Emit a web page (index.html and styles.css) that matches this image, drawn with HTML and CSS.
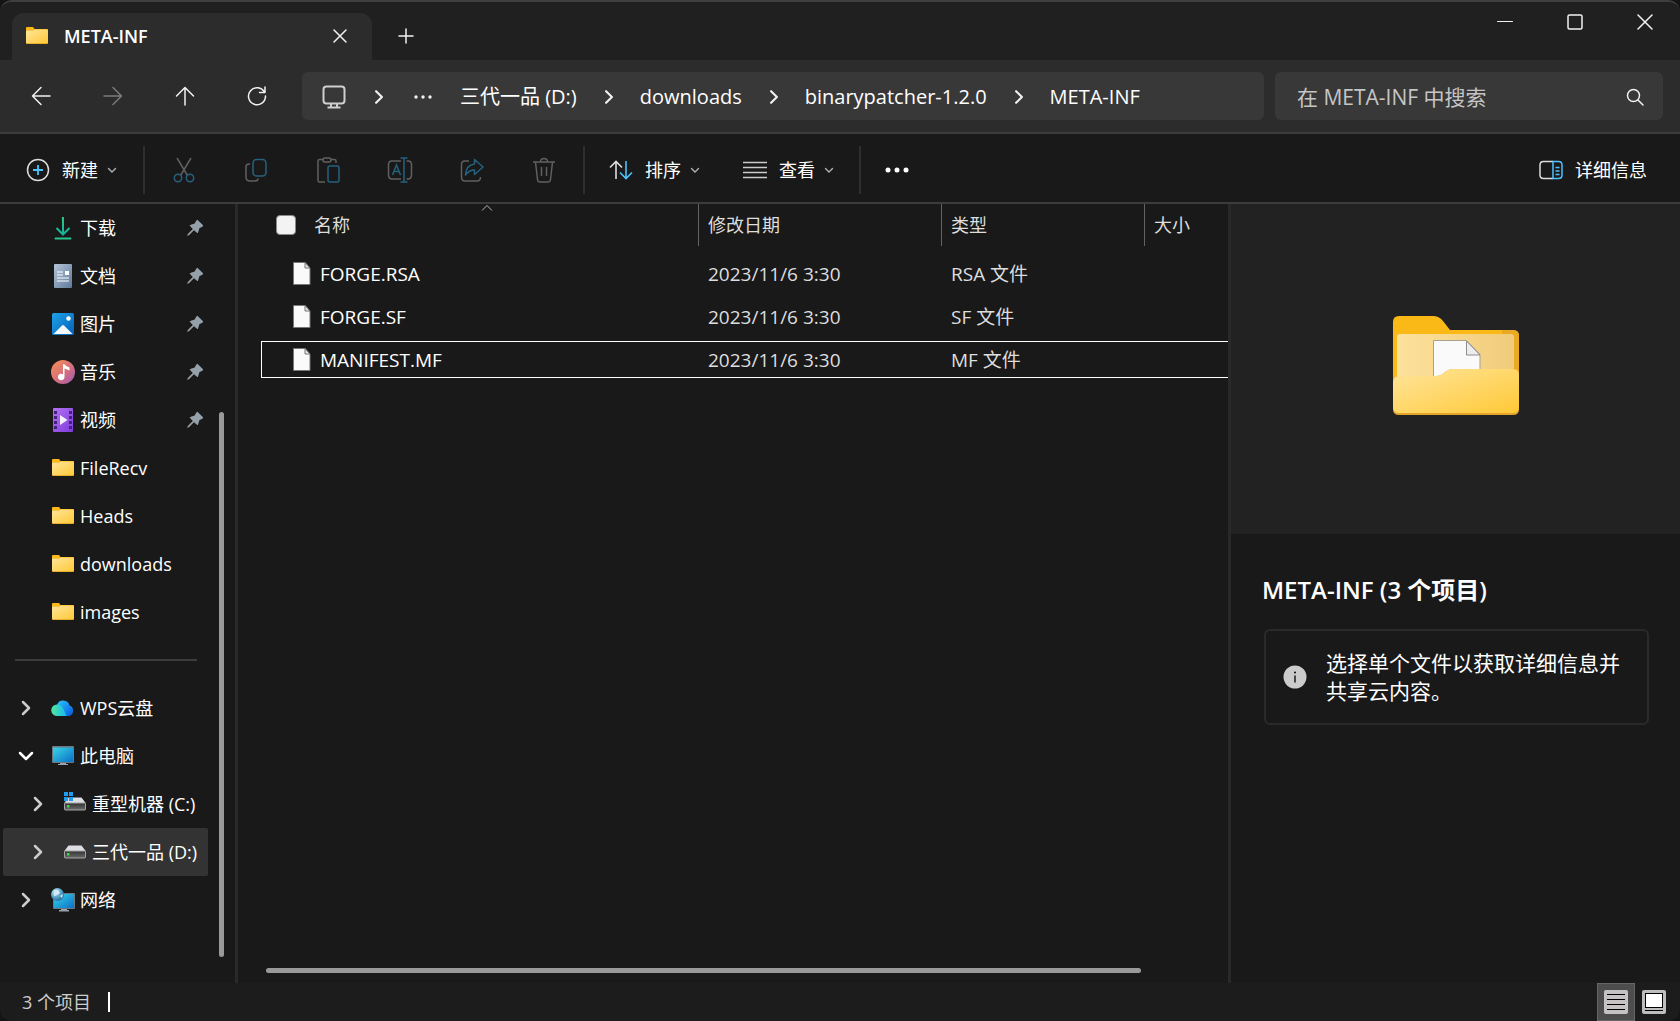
FILE: index.html
```
<!DOCTYPE html>
<html lang="zh-CN">
<head>
  <meta charset="UTF-8" />
  <meta name="viewport" content="width=device-width, initial-scale=1.0" />
  <title>META-INF</title>
  <link rel="stylesheet" href="styles.css">
</head>
<body>
  <svg class="defs" width="0" height="0" aria-hidden="true">
    <defs>
      <linearGradient id="gFolder" x1="0" y1="0" x2="1" y2="1"><stop offset="0" stop-color="#ffe59c"/><stop offset="1" stop-color="#ffc937"/></linearGradient>
      <linearGradient id="gInner" x1="0" y1="0" x2="1" y2="0"><stop offset="0" stop-color="#fde29c"/><stop offset="1" stop-color="#f0cb7b"/></linearGradient>
      <linearGradient id="gDown" x1="0" y1="0" x2="0" y2="1"><stop offset="0" stop-color="#2fce86"/><stop offset="1" stop-color="#15b09a"/></linearGradient>
      <linearGradient id="gDoc" x1="0" y1="0" x2="1" y2="1"><stop offset="0" stop-color="#b4c4d8"/><stop offset="1" stop-color="#5e7a9b"/></linearGradient>
      <linearGradient id="gPic" x1="0" y1="0" x2="1" y2="1"><stop offset="0" stop-color="#1ea2e8"/><stop offset="1" stop-color="#0560b6"/></linearGradient>
      <linearGradient id="gMusic" x1="0" y1="0" x2="1" y2="1"><stop offset="0" stop-color="#f9914f"/><stop offset=".55" stop-color="#d4707d"/><stop offset="1" stop-color="#a256bc"/></linearGradient>
      <linearGradient id="gVideo" x1="0" y1="0" x2="1" y2="1"><stop offset="0" stop-color="#b273f3"/><stop offset="1" stop-color="#7f3bdc"/></linearGradient>
      <linearGradient id="gScreen" x1="0" y1="0" x2="1" y2="1"><stop offset="0" stop-color="#37d6e5"/><stop offset="1" stop-color="#0b6fc8"/></linearGradient>
      <linearGradient id="gCloud" x1="0" y1="0" x2="1" y2="1"><stop offset="0" stop-color="#2cc6ff"/><stop offset="1" stop-color="#0757dd"/></linearGradient>
      <linearGradient id="gCloud2" x1="0" y1="0" x2="1" y2="0"><stop offset="0" stop-color="#53e89b"/><stop offset="1" stop-color="#12b9fb"/></linearGradient>
      <linearGradient id="gDisk" x1="0" y1="0" x2="0" y2="1"><stop offset="0" stop-color="#333"/><stop offset="1" stop-color="#6a6a6a"/></linearGradient>
      <radialGradient id="gGlobe" cx=".35" cy=".3" r=".8"><stop offset="0" stop-color="#d9f1fa"/><stop offset=".5" stop-color="#5ba6cd"/><stop offset="1" stop-color="#1e5f8f"/></radialGradient>
    </defs>
    <symbol id="folder" viewBox="0 0 24 24">
      <path d="M1 18V4Q1 3 2 3H8l1.500 2H22q1 0 1 1V12z" fill="#fbb918"/>
      <rect x="1" y="6" width="22" height="14" rx="1" fill="#e3a51f"/>
      <path d="M1 7.500q0-1 1-1h6.500l1.500-1H22q1 0 1 1v12q0 .7-1 .7H2q-1 0-1-.7z" fill="url(#gFolder)"/>
    </symbol>
    <symbol id="pin" viewBox="0 0 18 18">
      <path d="M10.500 1.200q.7-.7 1.400 0l4.900 4.900q.7.700-.1 1.300l-3.300 1.900-1.300 4.200q-.4.900-1.100.2L7.900 11.200 3.200 16 1.600 16.700 1.200 16.300 2 14.800 6.800 10 4 7q-.7-.7.200-1.100l4.500-1.300z" fill="#95a0a8"/>
    </symbol>
    <symbol id="file" viewBox="0 0 18 23">
      <path d="M.5.5H12L17 6V22.500H.5z" fill="#fafafa" stroke="#777"/>
      <path d="M12 .5V6h5z" fill="#e6e6e6" stroke="#777"/>
    </symbol>
    <symbol id="right" viewBox="0 0 22 22"><path d="M8 5l6 6-6 6" fill="none" stroke="#ccc" stroke-width="2.500" stroke-linecap="round" stroke-linejoin="round"/></symbol>
    <symbol id="crumb" viewBox="0 0 12 12"><path d="M3.500 1l5 5-5 5" fill="none" stroke="#f2f2f2" stroke-width="1.800" stroke-linecap="round" stroke-linejoin="round"/></symbol>
    <symbol id="small-down" viewBox="0 0 10 10"><path d="M1.500 3.500L5 7l3.500-3.500" fill="none" stroke="#b0b0b0" stroke-width="1.400" stroke-linecap="round"/></symbol>
    <symbol id="disk" viewBox="0 0 24 24">
      <path d="M5.500 5.500h13L23 11.500H1z" fill="#dcdee2"/>
      <rect x="1.500" y="11" width="21" height="7" rx=".8" fill="url(#gDisk)" stroke="#a4a4a4"/>
      <rect x="4" y="13" width="2.500" height="2.500" fill="#35dd3c"/>
    </symbol>
  </svg>

  <div class="window">
    <header class="titlebar">
      <div class="tab">
        <svg width="24" height="24"><use href="#folder"/></svg>
        <span class="tab-title">META-INF</span>
        <button class="tab-close" aria-label="关闭标签页">
          <svg width="14" height="14" viewBox="0 0 14 14"><path d="M1 1l12 12M13 1L1 13" class="line"/></svg>
        </button>
      </div>
      <button class="tab-add" aria-label="新标签页">
        <svg width="16" height="16" viewBox="0 0 16 16"><path d="M8 1v14M1 8h14" class="line"/></svg>
      </button>
      <div class="win-buttons">
        <button aria-label="最小化"><svg width="16" height="16" viewBox="0 0 16 16"><path d="M.5 7.500h15" class="line thin"/></svg></button>
        <button aria-label="最大化"><svg width="16" height="16" viewBox="0 0 16 16"><rect x="1" y="1" width="14" height="14" rx="1.500" class="line"/></svg></button>
        <button aria-label="关闭"><svg width="16" height="16" viewBox="0 0 16 16"><path d="M1 1l14 14M15 1L1 15" class="line"/></svg></button>
      </div>
    </header>

    <div class="navbar">
      <div class="nav-buttons">
        <button aria-label="后退"><svg width="20" height="20" viewBox="0 0 20 20"><path d="M19 10H1.500M10 1.500L1.500 10l8.500 8.500" class="line"/></svg></button>
        <button aria-label="前进" disabled><svg width="20" height="20" viewBox="0 0 20 20"><path d="M1 10h17.500M10 1.500l8.500 8.500-8.500 8.500" class="line"/></svg></button>
        <button aria-label="向上"><svg width="20" height="20" viewBox="0 0 20 20"><path d="M10 19V1.500M1.500 10L10 1.500l8.500 8.500" class="line"/></svg></button>
        <button aria-label="刷新"><svg width="20" height="20" viewBox="0 0 20 20"><path d="M17.500 6.200A8.500 8.500 0 1 0 18.500 10M18 1v5.500h-5.500" class="line"/></svg></button>
      </div>
      <nav class="address" aria-label="地址栏">
        <button class="monitor" aria-label="位置">
          <svg width="24" height="24" viewBox="0 0 24 24" fill="none" stroke="#cfcfcf" stroke-width="2"><rect x="1.500" y="1.500" width="21" height="17" rx="3"/><path d="M9 19v3M15 19v3M5.500 22.500h13"/></svg>
        </button>
        <svg width="14" height="14"><use href="#crumb"/></svg>
        <button class="dots" aria-label="更多位置"><svg width="18" height="4" viewBox="0 0 18 4" fill="#f2f2f2"><circle cx="2" cy="2" r="1.700"/><circle cx="9" cy="2" r="1.700"/><circle cx="16" cy="2" r="1.700"/></svg></button>
        <button class="crumb">三代一品 (D:)</button>
        <svg width="14" height="14"><use href="#crumb"/></svg>
        <button class="crumb">downloads</button>
        <svg width="14" height="14"><use href="#crumb"/></svg>
        <button class="crumb">binarypatcher-1.2.0</button>
        <svg width="14" height="14"><use href="#crumb"/></svg>
        <button class="crumb">META-INF</button>
      </nav>
      <div class="search">
        <input type="text" placeholder="在 META-INF 中搜索" aria-label="搜索" />
        <svg width="18" height="18" viewBox="0 0 18 18"><circle cx="7.500" cy="7.500" r="6" class="line"/><path d="M12 12l5 5" class="line"/></svg>
      </div>
    </div>

    <div class="commands">
      <button class="cmd new">
        <svg width="24" height="24" viewBox="0 0 24 24" fill="none"><circle cx="12" cy="12" r="10.500" stroke="#ddd" stroke-width="1.500"/><path d="M12 7v10M7 12h10" stroke="#4cc2ff" stroke-width="1.800"/></svg>
        新建
        <svg class="caret" width="10" height="10"><use href="#small-down"/></svg>
      </button>
      <div class="cmd-icons">
        <button aria-label="剪切" disabled><svg width="24" height="26" viewBox="0 0 24 26"><path d="M5 1l10.500 17.500M19 1L8.500 18.500" class="gray"/><circle cx="6" cy="21" r="3.700" class="blue"/><circle cx="18" cy="21" r="3.700" class="blue"/></svg></button>
        <button aria-label="复制" disabled><svg width="24" height="26" viewBox="0 0 24 26"><path d="M6 7H5q-3 0-3 3v10q0 4 4 4h5q3 0 3-2.500" class="gray"/><rect x="9" y="2.500" width="13" height="16.500" rx="3.500" class="blue"/></svg></button>
        <button aria-label="粘贴" disabled><svg width="24" height="26" viewBox="0 0 24 26"><path d="M9 25H3.500Q2 25 2 23.500V4q0-1.500 1.500-1.500H7M15 2.500h3.500Q20 2.500 20 4v2" class="gray"/><rect x="7" y="1" width="8" height="4" rx="2" class="gray"/><rect x="12" y="9" width="11" height="16" rx="2" class="blue"/></svg></button>
        <button aria-label="重命名" disabled><svg width="26" height="26" viewBox="0 0 26 26"><path d="M14 4H5Q1.500 4 1.500 7.500v10Q1.500 22 5 22h9M19.500 4H21q3.500 0 3.500 3.500v10Q24.500 22 21 22h-1.500" class="gray"/><path d="M5.500 18L9.500 8l4 10M7 14.500h5M13.500 1h7M17 1v24M13.500 25h7" class="blue"/></svg></button>
        <button aria-label="共享" disabled><svg width="24" height="26" viewBox="0 0 24 26"><path d="M9 4H5Q1.500 4 1.500 7.500V20Q1.500 24 5 24h12q3.500 0 3.500-4" class="gray"/><path d="M14.500 2.500L23 10l-8.500 7.500V13Q9 13 5.500 18 6 8 14.500 7z" class="blue" stroke-linejoin="round"/></svg></button>
        <button aria-label="删除" disabled><svg width="24" height="26" viewBox="0 0 24 26"><path d="M1 5h22M8.500 5q0-3.500 3.500-3.500T15.500 5M3.500 5l2 17.500q.3 2.500 2.500 2.500h8q2.200 0 2.500-2.500L20.500 5M9.500 10v9M14.500 10v9" class="gray"/></svg></button>
      </div>
      <div class="cmd-group">
        <button class="cmd">
          <svg width="24" height="20" viewBox="0 0 24 20" fill="none" stroke-width="1.600"><path d="M7 19V1.500M1 7.500l6-6 6 6" stroke="#ddd"/><path d="M17 1v17.500M11 12.500l6 6 6-6" stroke="#4cc2ff"/></svg>
          排序
          <svg class="caret" width="10" height="10"><use href="#small-down"/></svg>
        </button>
        <button class="cmd">
          <svg width="24" height="20" viewBox="0 0 24 20"><path d="M0 2.500h24M0 7.500h24M0 12.500h24M0 17.500h24" stroke="#ccc" stroke-width="1.500"/></svg>
          查看
          <svg class="caret" width="10" height="10"><use href="#small-down"/></svg>
        </button>
      </div>
      <button class="more" aria-label="更多"><svg width="24" height="6" viewBox="0 0 24 6" fill="#fff"><circle cx="3" cy="3" r="2.500"/><circle cx="12" cy="3" r="2.500"/><circle cx="21" cy="3" r="2.500"/></svg></button>
      <button class="cmd details-toggle">
        <svg width="24" height="20" viewBox="0 0 24 20" fill="none" stroke-width="1.500"><path d="M14 1.500H4.500Q1 1.500 1 5v10q0 3.500 3.500 3.500H14" stroke="#ddd"/><path d="M14 1.500h5.500Q23 1.500 23 5v10q0 3.500-3.500 3.500H14zM16.500 7.500h4M16.500 11h4M16.500 14.500h4" stroke="#4cc2ff"/></svg>
        详细信息
      </button>
    </div>

    <div class="content">
      <aside class="sidebar">
        <ul>
          <li><a href="#"><svg viewBox="0 0 24 24" fill="none" stroke="url(#gDown)" stroke-width="2"><path d="M11.900 1l.2 17M5.500 12l6.500 6.500 6.500-6.500"/><path d="M4 22h16v1H4z" fill="#27c48f" stroke="#27c48f" stroke-width="1"/></svg>下载</a><svg class="pin"><use href="#pin"/></svg></li>
          <li><a href="#"><svg viewBox="0 0 24 24"><rect x="3" width="18" height="24" rx="1" fill="url(#gDoc)"/><path d="M6 8h6M6 11h6M6 14h12M6 17h12" stroke="#fff" stroke-width="1.200"/><rect x="14" y="7" width="4" height="4" fill="#fff"/></svg>文档</a><svg class="pin"><use href="#pin"/></svg></li>
          <li><a href="#"><svg viewBox="0 0 24 24"><rect x="1" y="1" width="22" height="22" rx="1.500" fill="url(#gPic)"/><path d="M2.500 22l8.500-8.500q1-1 2 0l8.500 8.500z" fill="#f4f8fc"/><circle cx="17.500" cy="6.500" r="2.200" fill="#fff"/></svg>图片</a><svg class="pin"><use href="#pin"/></svg></li>
          <li><a href="#"><svg viewBox="0 0 24 24"><circle cx="12" cy="12" r="12" fill="url(#gMusic)"/><path d="M12 4.500l1-.5q2 2.500 5.500 3.500v3l-5-2V17a3.300 3.300 0 1 1-1.500-2.800z" fill="#fff"/></svg>音乐</a><svg class="pin"><use href="#pin"/></svg></li>
          <li><a href="#"><svg viewBox="0 0 24 24"><rect x="2" width="20" height="24" rx="1" fill="url(#gVideo)"/><path d="M4.500 3v20M19.500 3v20" stroke="#45217e" stroke-width="3" stroke-dasharray="3 2"/><path d="M9 7l7.500 5L9 17z" fill="#f5effd"/></svg>视频</a><svg class="pin"><use href="#pin"/></svg></li>
          <li><a href="#"><svg><use href="#folder"/></svg>FileRecv</a></li>
          <li><a href="#"><svg><use href="#folder"/></svg>Heads</a></li>
          <li><a href="#"><svg><use href="#folder"/></svg>downloads</a></li>
          <li><a href="#"><svg><use href="#folder"/></svg>images</a></li>
        </ul>
        <hr>
        <ul class="tree">
          <li>
            <button aria-label="展开"><svg><use href="#right"/></svg></button>
            <a href="#"><svg viewBox="0 0 24 24"><path d="M6 9a6.500 6.500 0 0 1 12.500.5A5.500 5.500 0 0 1 18 20H9z" fill="url(#gCloud)"/><path d="M6.500 8.500Q10 8.500 12 12l3.500 8H7A5.800 5.800 0 1 1 6.500 8.500z" fill="url(#gCloud2)"/></svg>WPS云盘</a>
          </li>
          <li>
            <button aria-label="折叠"><svg viewBox="0 0 22 22"><path d="M5 8l6 6 6-6" fill="none" stroke="#fff" stroke-width="2.500" stroke-linecap="round" stroke-linejoin="round"/></svg></button>
            <a href="#"><svg viewBox="0 0 24 24"><path d="M9 19h6v1h2v1H7v-1h2z" fill="#9aa3ab"/><rect x="1" y="2" width="22" height="17" rx="1" fill="#6d7780"/><rect x="2" y="3.500" width="20" height="14.500" fill="url(#gScreen)"/></svg>此电脑</a>
          </li>
          <li class="sub">
            <button aria-label="展开"><svg><use href="#right"/></svg></button>
            <a href="#"><svg viewBox="0 0 24 24"><use href="#disk"/><path d="M1 0h4v4H1zM6 0h4v4H6zM1 5h4v4H1zM6 5h4v4H6z" fill="#1f9cf0"/></svg>重型机器 (C:)</a>
          </li>
          <li class="sub selected">
            <button aria-label="展开"><svg><use href="#right"/></svg></button>
            <a href="#"><svg><use href="#disk"/></svg>三代一品 (D:)</a>
          </li>
          <li>
            <button aria-label="展开"><svg><use href="#right"/></svg></button>
            <a href="#"><svg viewBox="0 0 24 24"><path d="M10 21h6v1h2v1.500H8V22h2z" fill="#9aa3ab"/><rect x="2" y="5" width="22" height="16" rx="1" fill="#6d7780"/><rect x="3" y="6" width="20" height="14" fill="url(#gScreen)"/><circle cx="6.500" cy="6.500" r="6.500" fill="url(#gGlobe)"/><path d="M3 3q3-2 5 0t-2 4-3 1zM9 8l3-2-1 4z" fill="#cfeaf5"/></svg>网络</a>
          </li>
        </ul>
        <div class="scroll-y"></div>
      </aside>

      <main class="files">
        <table>
          <colgroup><col class="c-name"><col class="c-date"><col class="c-type"><col></colgroup>
          <thead>
            <tr>
              <th class="name-head">
                <div><input type="checkbox" id="all" /><label for="all">名称</label></div>
                <svg class="sort-mark" width="12" height="8" viewBox="0 0 12 8"><path d="M1 6.500l5-5 5 5" fill="none" stroke="#bbb"/></svg>
              </th>
              <th><div>修改日期</div></th>
              <th><div>类型</div></th>
              <th><div>大小</div></th>
            </tr>
          </thead>
          <tbody>
            <tr><td><div class="file-name"><svg><use href="#file"/></svg>FORGE.RSA</div></td><td>2023/11/6 3:30</td><td>RSA 文件</td><td></td></tr>
            <tr><td><div class="file-name"><svg><use href="#file"/></svg>FORGE.SF</div></td><td>2023/11/6 3:30</td><td>SF 文件</td><td></td></tr>
            <tr class="focused"><td><div class="file-name"><svg><use href="#file"/></svg>MANIFEST.MF</div></td><td>2023/11/6 3:30</td><td>MF 文件</td><td></td></tr>
          </tbody>
        </table>
        <div class="scroll-x"></div>
      </main>

      <section class="details">
        <div class="preview">
          <svg width="128" height="102" viewBox="0 0 128 102">
            <path d="M1 92V7q0-6 6-6h34q6 0 10 5l7 9h63q6 0 6 6v72z" fill="#fbb918"/>
            <path d="M110 15h11q6 0 6 6v60h-17z" fill="#e9a922"/>
            <rect x="5" y="19" width="117" height="60" rx="3" fill="url(#gInner)"/>
            <path d="M41.500 25.500H74.500L88 39.500V70H41.500z" fill="#fafafa" stroke="#a9a18c"/>
            <path d="M74.500 26v14H88z" fill="#ededed" stroke="#8d8d8d"/>
            <path d="M1 68q0-7 6-7H44q5 0 9-4 4-3 8-3h60q6 0 6 6v34q0 6-6 6H7q-6 0-6-6z" fill="#e2a42a"/>
            <path d="M1 68q0-7 6-7H44q5 0 9-4 4-3 8-3h60q6 0 6 6v32q0 6-6 6H7q-6 0-6-6z" fill="url(#gFolder)"/>
          </svg>
        </div>
        <h2>META-INF (3 个项目)</h2>
        <div class="info">
          <svg width="24" height="24" viewBox="0 0 24 24"><circle cx="12" cy="12" r="11.500" fill="#ccc"/><circle cx="12" cy="7.500" r="1.100" fill="#1a1a1a"/><path d="M12 10.500v7" stroke="#1a1a1a" stroke-width="1.500"/></svg>
          <p>选择单个文件以获取详细信息并共享云内容。</p>
        </div>
      </section>
    </div>

    <footer class="status">
      <span class="count">3 个项目</span>
      <div class="view-buttons">
        <button class="active" aria-label="详细信息视图"><svg width="24" height="24" viewBox="0 0 24 24"><rect width="24" height="24" rx="2" fill="#c6c2c4"/><path d="M3 4.500h18M3 9.500h18M3 14.500h18M3 19.500h18" stroke="#000"/></svg></button>
        <button aria-label="大图标视图"><svg width="24" height="24" viewBox="0 0 24 24"><rect width="24" height="24" rx="2" fill="#bdbdbd"/><rect x="3.500" y="3.500" width="17" height="14" fill="#fff" stroke="#000"/><path d="M3 20.500h18" stroke="#000"/></svg></button>
      </div>
    </footer>
  </div>
</body>
</html>
```
FILE: styles.css
```
* { box-sizing: border-box; }
body { margin: 0; background: #141414; color: #fff; font: 18px/24px "Open Sans", "Noto Sans CJK SC", sans-serif; }
button { display: flex; align-items: center; justify-content: center; padding: 0; border: 0; background: none; color: inherit; font: inherit; }
a { color: inherit; text-decoration: none; }
ul { margin: 0; padding: 0; list-style: none; }
svg { flex: none; }
.defs { position: absolute; }
.line { fill: none; stroke: #f2f2f2; stroke-width: 1.5; stroke-linecap: round; stroke-linejoin: round; }
.thin { stroke-width: 1; }

.window { display: flex; flex-direction: column; height: 100vh; overflow: hidden; border-top: 2px solid #3f3f3f; border-radius: 12px; background: #191919; }

/* tabs */
.titlebar { display: flex; height: 58px; padding-left: 12px; background: #202020; }
.tab { display: flex; align-items: center; width: 360px; margin-top: 11px; padding: 0 24px 2px 13px; border-radius: 12px 12px 0 0; background: #2c2c2c; }
.tab-title { margin-left: 15px; font-weight: 600; }
.tab-close { width: 16px; height: 24px; margin-left: auto; }
.tab-add { width: 32px; margin: 11px 0 2px 18px; }
.win-buttons { display: flex; align-items: flex-start; margin-left: auto; }
.win-buttons button { width: 70px; height: 40px; }

/* navigation */
.navbar { display: flex; align-items: center; height: 74px; padding: 0 17px 0 5px; border-bottom: 2px solid #3c3c3c; background: #2c2c2c; }
.nav-buttons { display: flex; width: 297px; }
.nav-buttons button { width: 72px; height: 48px; }
.nav-buttons button:disabled { opacity: .4; }
.address { display: flex; flex: 1; align-items: center; height: 48px; margin-right: 11px; padding: 2px 0 0 20px; border-radius: 6px; background: #383838; font-size: 20px; white-space: nowrap; }
.monitor { margin-right: 26px; }
.dots { margin: 0 28px; }
.crumb { margin-right: 25px; }
.crumb + svg { margin-right: 24px; }
.search { display: flex; align-items: center; width: 388px; height: 48px; padding: 2px 19px 0 22px; border-radius: 6px; background: #383838; }
.search input { flex: 1; min-width: 0; padding: 0; border: 0; outline: 0; background: none; color: #fff; font: inherit; font-size: 21px; }
.search input::placeholder { color: #c5c5c5; opacity: 1; }

/* command bar */
.commands { display: flex; align-items: center; height: 70px; padding: 3px 33px 0 26px; border-bottom: 2px solid #3c3c3c; }
.cmd { gap: 12px; }
.cmd .caret { margin-left: -3px; }
.new { margin-right: 26px; }
.cmd-icons, .cmd-group { display: flex; align-items: center; height: 48px; border-left: 2px solid #2e2e2e; }
.cmd-icons button { width: 72px; }
.cmd-icons { padding: 0 3px; }
.cmd-group { gap: 43px; padding: 0 25px 0 24px; border-right: 2px solid #2e2e2e; }
.gray, .blue { fill: none; stroke: #606060; stroke-width: 1.5; }
.blue { stroke: #26627f; }
.more { margin-left: 24px; }
.details-toggle { margin-left: auto; }

/* panes */
.content { display: flex; flex: 1; min-height: 0; }
.sidebar { position: relative; flex: none; width: 238px; padding: 0 27px 0 3px; border-right: 3px solid #292929; }
.sidebar li { display: flex; align-items: center; height: 48px; padding: 0 4px 0 48px; white-space: nowrap; }
.sidebar .tree li { gap: 14px; padding-left: 12px; }
.sidebar .tree .sub { padding-left: 24px; }
.sidebar .selected { border-radius: 2px; background: #333; }
.sidebar a { display: flex; align-items: center; gap: 5px; }
.sidebar a svg { width: 24px; height: 24px; }
.sidebar button svg { width: 22px; height: 22px; }
.sidebar .pin { width: 18px; height: 18px; margin-left: auto; }
.sidebar hr { height: 2px; margin: 23px 11px 23px 12px; border: 0; background: #3c3c3c; }
.scroll-y { position: absolute; top: 208px; right: 11px; bottom: 26px; width: 5px; border-radius: 3px; background: #999; }

.files { position: relative; flex: 1; min-width: 0; overflow: hidden; padding-left: 23px; }
table { width: 100%; margin-top: -6px; border-spacing: 0 6px; table-layout: fixed; }
.c-name { width: 437px; }
.c-date { width: 243px; }
.c-type { width: 203px; }
th { position: relative; height: 45px; padding: 0; color: #dedede; font-weight: 400; text-align: left; vertical-align: top; }
th div { display: flex; align-items: center; height: 42px; padding-left: 9px; border-left: 1px solid #636363; }
.name-head div { padding-left: 15px; border: 0; }
.name-head input { appearance: none; width: 20px; height: 20px; margin: 0 18px 0 0; border: 1px solid #8a8a8a; border-radius: 4px; background: #f3f3f3; }
.sort-mark { position: absolute; top: 0; left: 220px; }
td { height: 37px; padding: 0 0 0 10px; border: 1px solid transparent; border-width: 1px 0; color: #dedede; font-size: 19px; white-space: nowrap; }
td:first-child { padding-left: 31px; border-left-width: 1px; color: #fff; }
.focused td { border-color: #fff; }
.file-name { display: flex; align-items: center; gap: 9px; }
.file-name svg { width: 18px; height: 23px; }
.scroll-x { position: absolute; right: 87px; bottom: 10px; left: 28px; height: 5px; border-radius: 3px; background: #999; }

.details { flex: none; width: 452px; border-left: 3px solid #292929; }
.preview { display: flex; align-items: center; justify-content: center; height: 330px; padding-bottom: 6px; background: #222; }
.details h2 { margin: 40px 31px 23px; font-size: 24px; line-height: 32px; font-weight: 600; }
.info { display: flex; align-items: center; gap: 19px; margin: 0 31px 0 33px; padding: 18px 24px 18px 17px; border: 2px solid #2a2a2a; border-radius: 6px; font-size: 21px; line-height: 28px; }
.info p { margin: 0; }

/* status bar */
.status { display: flex; align-items: center; justify-content: space-between; height: 38px; padding: 0 7px 0 22px; background: #1c1c1c; color: #ccc; }
.count { padding-right: 17px; border-right: 2px solid #fff; line-height: 20px; }
.view-buttons { display: flex; }
.view-buttons button { width: 38px; height: 38px; }
.view-buttons .active { border: 1px solid #666; background: #4d4d4d; }
```
